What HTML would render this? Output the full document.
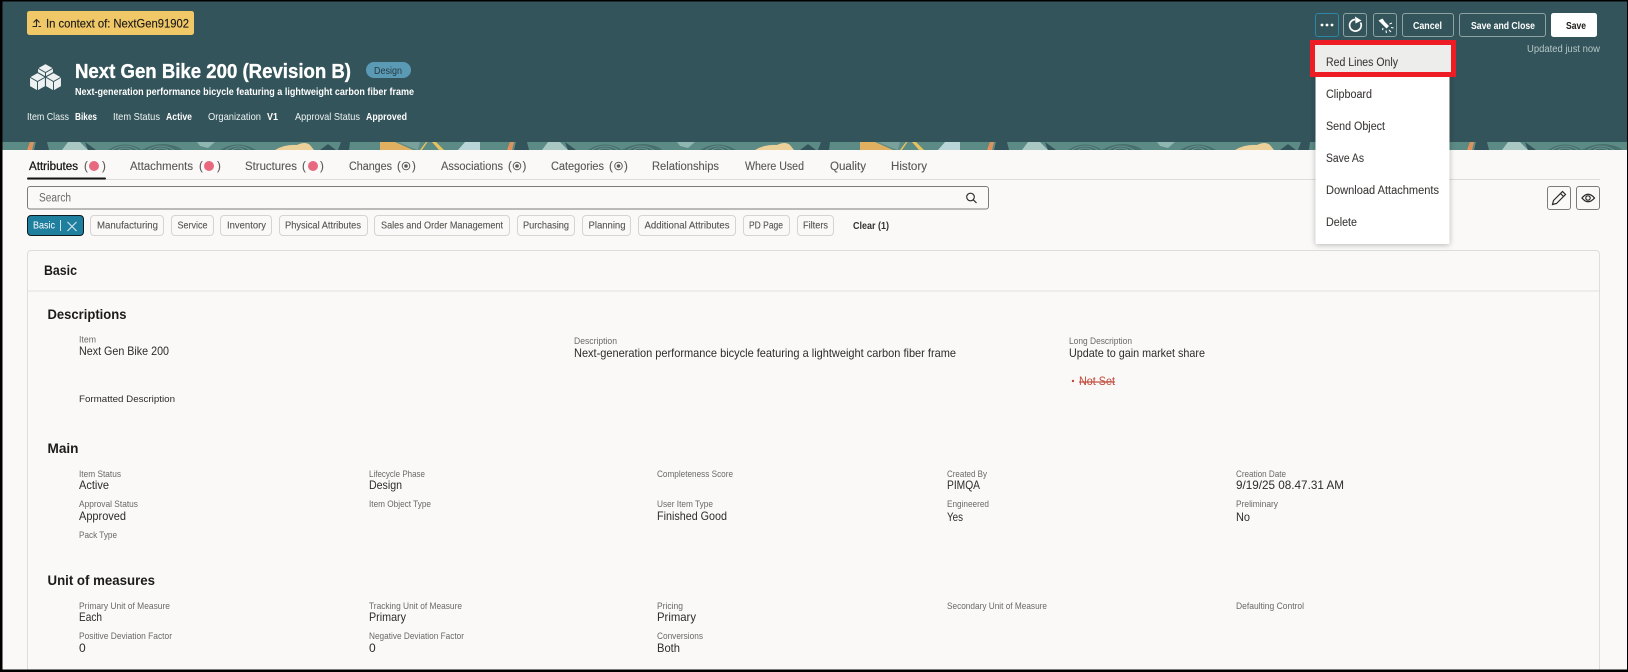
<!DOCTYPE html>
<html lang="en"><head><meta charset="utf-8"><title>Next Gen Bike 200</title>
<style>
html,body{margin:0;padding:0;background:#000;width:1628px;height:672px;overflow:hidden}
svg{display:block}
text{font-family:"Liberation Sans",sans-serif;white-space:pre}
.t{font-size:11.5px;fill:#5a5855;stroke:#5a5855;stroke-width:.12}
.c{font-size:10px;fill:#55534f;stroke:#55534f;stroke-width:.1}
.l{font-size:9.5px;fill:#6b6966}
.v{font-size:12px;fill:#2e2c2a}
.h{font-size:14px;font-weight:bold;fill:#1d1b19}
.m{font-size:10.5px;fill:#eef3f3}
.mb{font-size:10.5px;fill:#fff;font-weight:bold}
.b{font-size:10.5px;fill:#fff;font-weight:bold}
.mn{font-size:11.5px;fill:#3c3a38;stroke:#3c3a38;stroke-width:.08}
.chip{fill:#faf9f7;stroke:#d6d4d1;stroke-width:1}
.btn{fill:none;stroke:#8fa3a4;stroke-width:1}
</style></head><body>
<svg width="1628" height="672" viewBox="0 0 1628 672" xmlns="http://www.w3.org/2000/svg">
<defs>
<pattern id="band" x="0" y="142" width="480" height="8" patternUnits="userSpaceOnUse">
<rect width="480" height="8" fill="#5c8a84"/>
<polygon points="27,8 30,0 34,0 32,8" fill="#e0905a"/>
<polygon points="34,8 36,0 47,0 49,8" fill="#33545a"/>
<polygon points="62,8 68,0 80,0 88,8" fill="#a9c7c3"/>
<path d="M88,8 L85,0 L96,8 Z" fill="#33545a"/>
<path d="M108,8 Q125,-3 142,8 Z M142,8 Q160,-3 180,6 L182,8 Z" fill="#47706f"/>
<path d="M112,8 Q125,0 138,8 M118,8 Q125,4 132,8 M148,8 Q160,0 174,8 M154,8 Q160,4 168,8" fill="none" stroke="#6c9a94" stroke-width=".8"/>
<path d="M197,0 L215,0 L208,6 L200,4 Z" fill="#8fb6b0"/>
<path d="M220,8 Q238,-3 256,8 Z" fill="#47706f"/>
<path d="M226,8 Q238,0 250,8 M232,8 Q238,4 244,8" fill="none" stroke="#6c9a94" stroke-width=".8"/>
<path d="M275,8 Q285,2 297,3 Q305,-1 310,3 L314,8 Z" fill="#ecd09a"/>
<polygon points="320,8 328,2 336,8" fill="#33545a"/>
<polygon points="338,8 341,0 350,0 349,8" fill="#33545a"/>
<polygon points="380,0 395,0 413,8 380,8" fill="#e0b060"/>
<polygon points="398,0 420,0 418,8 412,6" fill="#7aa09b"/>
<polygon points="420,8 426,0 427.500,0 422,8" fill="#e8c25c"/>
<polygon points="432,0 436,0 444,8 439,8" fill="#e8c25c"/>
<polygon points="458,8 465,0 482,0 488,8" fill="#bad5d7"/>
</pattern>
<filter id="sh" x="-10%" y="-10%" width="120%" height="120%"><feDropShadow dx="0" dy="1" stdDeviation="3" flood-color="#000" flood-opacity=".28"/></filter>
</defs>

<!-- frame and backgrounds -->
<rect width="1628" height="672" fill="#000"/>
<rect x="2.500" y="1.500" width="1624.500" height="668" fill="#faf9f7"/>
<rect x="2.500" y="1.500" width="1624.500" height="141" fill="#33545a"/>
<rect x="2.500" y="142" width="1624.500" height="8" fill="url(#band)"/>

<!-- context badge -->
<rect x="27" y="11" width="167" height="24" rx="2.500" fill="#f0c868"/>
<path d="M32.500 26.500H36.500V20M33.500 22.500L36.500 19.500L39.500 22.500M38.500 26.500H41" fill="none" stroke="#2a2824" stroke-width="1.100"/>
<text x="46" y="27.500" font-size="12" fill="#1d1b19" stroke="#1d1b19" stroke-width=".15" textLength="143" lengthAdjust="spacingAndGlyphs">In context of: NextGen91902</text>

<!-- cubes icon -->
<g fill="#eef1f1" stroke="#33545a" stroke-width="1.100" stroke-linejoin="round">
<path d="M45.500 63.500L53.500 68V77L45.500 81.500L37.500 77V68Z"/>
<path d="M37.500 72.500L45.500 77V86.500L37.500 91L29.500 86.500V77Z"/>
<path d="M53.500 72.500L61.500 77V86.500L53.500 91L45.500 86.500V77Z"/>
</g>
<path d="M37.500 68L45.500 72.500L53.500 68M45.500 72.500V77M29.500 77L37.500 81.500L45.500 77M37.500 81.500V91M45.500 77L53.500 81.500L61.500 77M53.500 81.500V91" fill="none" stroke="#33545a" stroke-width="1"/>

<!-- title -->
<text x="75" y="78" font-size="20.500" font-weight="bold" fill="#fff" stroke="#fff" stroke-width=".35" textLength="276" lengthAdjust="spacingAndGlyphs">Next Gen Bike 200 (Revision B)</text>
<rect x="366" y="62" width="45" height="16" rx="8" fill="#5b9ab5"/>
<text x="374" y="74" font-size="10.500" fill="#263a42" textLength="28" lengthAdjust="spacingAndGlyphs">Design</text>
<text x="75" y="95" font-size="10.500" font-weight="bold" fill="#fff" textLength="339" lengthAdjust="spacingAndGlyphs">Next-generation performance bicycle featuring a lightweight carbon fiber frame</text>
<text class="m" x="27" y="120" textLength="42" lengthAdjust="spacingAndGlyphs">Item Class</text>
<text class="mb" x="75" y="120" textLength="22" lengthAdjust="spacingAndGlyphs">Bikes</text>
<text class="m" x="113" y="120" textLength="47" lengthAdjust="spacingAndGlyphs">Item Status</text>
<text class="mb" x="166" y="120" textLength="26" lengthAdjust="spacingAndGlyphs">Active</text>
<text class="m" x="208" y="120" textLength="53" lengthAdjust="spacingAndGlyphs">Organization</text>
<text class="mb" x="267" y="120" textLength="11" lengthAdjust="spacingAndGlyphs">V1</text>
<text class="m" x="295" y="120" textLength="65" lengthAdjust="spacingAndGlyphs">Approval Status</text>
<text class="mb" x="366" y="120" textLength="41" lengthAdjust="spacingAndGlyphs">Approved</text>

<!-- action buttons -->
<rect x="1315.500" y="13.500" width="23" height="23" rx="2.500" fill="none" stroke="#2f86a6"/>
<g fill="#fff"><circle cx="1322" cy="25" r="1.400"/><circle cx="1327" cy="25" r="1.400"/><circle cx="1332" cy="25" r="1.400"/></g>
<rect class="btn" x="1343.500" y="13.500" width="23" height="23" rx="2.500"/>
<path d="M1360.500 22.500A5.800 5.800 0 1 1 1355 19.500" fill="none" stroke="#fff" stroke-width="1.700"/>
<path d="M1355 16.500L1361.500 20.500L1355.500 23.500Z" fill="#fff"/>
<rect class="btn" x="1373.500" y="13.500" width="23" height="23" rx="2.500"/>
<path d="M1378.500 20.500L1382.500 18.500L1384.500 21.500L1389 26L1386.500 28.500L1382 24Z" fill="#fff"/>
<path d="M1389.500 24L1392 23M1391 27.500L1393.500 28M1386 30.500L1386.500 33M1389 30L1391 32M1383 28L1382.500 30" stroke="#fff" stroke-width="1.100" fill="none"/>
<rect class="btn" x="1402.500" y="13.500" width="51" height="23" rx="2.500"/>
<text class="b" x="1413" y="29" textLength="29" lengthAdjust="spacingAndGlyphs">Cancel</text>
<rect class="btn" x="1459.500" y="13.500" width="86" height="23" rx="2.500"/>
<text class="b" x="1471" y="29" textLength="64" lengthAdjust="spacingAndGlyphs">Save and Close</text>
<rect x="1551" y="13" width="46" height="24" rx="2.500" fill="#fff"/>
<text x="1566" y="29" font-size="10.500" font-weight="bold" fill="#1d1b19" textLength="20" lengthAdjust="spacingAndGlyphs">Save</text>
<text x="1527" y="52" font-size="10" fill="#b6c6c8" textLength="73" lengthAdjust="spacingAndGlyphs">Updated just now</text>

<!-- tabs -->
<text class="t" style="fill:#161513;stroke:#161513;stroke-width:.25" x="29" y="170" textLength="49" lengthAdjust="spacingAndGlyphs">Attributes</text>
<text class="t" x="84" y="170">(</text><circle cx="94" cy="166" r="5" fill="#e8697f"/><text class="t" x="102" y="170">)</text>
<text class="t" x="130" y="170" textLength="63" lengthAdjust="spacingAndGlyphs">Attachments</text>
<text class="t" x="199" y="170">(</text><circle cx="209" cy="166" r="5" fill="#e8697f"/><text class="t" x="217" y="170">)</text>
<text class="t" x="245" y="170" textLength="52" lengthAdjust="spacingAndGlyphs">Structures</text>
<text class="t" x="302" y="170">(</text><circle cx="313" cy="166" r="5" fill="#e8697f"/><text class="t" x="320" y="170">)</text>
<text class="t" x="349" y="170" textLength="43" lengthAdjust="spacingAndGlyphs">Changes</text>
<text class="t" x="397" y="170">(</text><circle cx="406" cy="166" r="3.800" fill="none" stroke="#5f5d5a"/><circle cx="406" cy="166" r="1.800" fill="#5f5d5a"/><text class="t" x="412" y="170">)</text>
<text class="t" x="441" y="170" textLength="62" lengthAdjust="spacingAndGlyphs">Associations</text>
<text class="t" x="508" y="170">(</text><circle cx="517" cy="166" r="3.800" fill="none" stroke="#5f5d5a"/><circle cx="517" cy="166" r="1.800" fill="#5f5d5a"/><text class="t" x="522.500" y="170">)</text>
<text class="t" x="551" y="170" textLength="53" lengthAdjust="spacingAndGlyphs">Categories</text>
<text class="t" x="609" y="170">(</text><circle cx="618.500" cy="166" r="3.800" fill="none" stroke="#5f5d5a"/><circle cx="618.500" cy="166" r="1.800" fill="#5f5d5a"/><text class="t" x="624" y="170">)</text>
<text class="t" x="652" y="170" textLength="67" lengthAdjust="spacingAndGlyphs">Relationships</text>
<text class="t" x="745" y="170" textLength="59" lengthAdjust="spacingAndGlyphs">Where Used</text>
<text class="t" x="830" y="170" textLength="36" lengthAdjust="spacingAndGlyphs">Quality</text>
<text class="t" x="891" y="170" textLength="36" lengthAdjust="spacingAndGlyphs">History</text>
<rect x="27" y="179" width="1573" height="1" fill="#dedcd9"/>
<rect x="27" y="177.500" width="79" height="2" rx="1" fill="#161513"/>

<!-- search -->
<rect x="27.500" y="186.500" width="961" height="22.500" rx="2.500" fill="#faf9f7" stroke="#7d7b78"/>
<text x="39" y="201.500" font-size="11.500" fill="#6b6966" textLength="32" lengthAdjust="spacingAndGlyphs">Search</text>
<circle cx="970.500" cy="197" r="3.800" fill="none" stroke="#2a2826" stroke-width="1.100"/>
<path d="M973.300 199.800L976.500 203" stroke="#2a2826" stroke-width="1.200"/>

<!-- pencil and eye -->
<rect x="1547.500" y="186.500" width="23" height="23" rx="2.500" fill="none" stroke="#7d7b78"/>
<path d="M1552.500 204.500L1553.500 200.500L1562.500 191.500L1565.500 194.500L1556.500 203.500ZM1560.500 193.500L1563.500 196.500" fill="none" stroke="#2a2826" stroke-width="1.200"/>
<rect x="1576.500" y="186.500" width="23" height="23" rx="2.500" fill="none" stroke="#7d7b78"/>
<path d="M1582 198Q1588 190.500 1594.500 198Q1588 205.500 1582 198Z" fill="none" stroke="#2a2826" stroke-width="1.300"/>
<circle cx="1588" cy="198" r="2.200" fill="none" stroke="#2a2826" stroke-width="1.200"/>

<!-- chips -->
<rect x="27.500" y="215.500" width="56" height="20" rx="3.500" fill="#1f7f9f" stroke="#0d1a20"/>
<text x="33" y="228.500" font-size="10" fill="#fff" textLength="22" lengthAdjust="spacingAndGlyphs">Basic</text>
<path d="M60.500 220V231" stroke="#cfe3ea"/>
<path d="M67.500 222L76.500 231M76.500 222L67.500 231" stroke="#cfe3ea" stroke-width="1.200"/>
<rect class="chip" x="90.500" y="215.500" width="73" height="20" rx="3.500"/><text class="c" x="97" y="228.500" textLength="61" lengthAdjust="spacingAndGlyphs">Manufacturing</text>
<rect class="chip" x="171.500" y="215.500" width="42" height="20" rx="3.500"/><text class="c" x="177.500" y="228.500" textLength="30" lengthAdjust="spacingAndGlyphs">Service</text>
<rect class="chip" x="220.500" y="215.500" width="51" height="20" rx="3.500"/><text class="c" x="227" y="228.500" textLength="39" lengthAdjust="spacingAndGlyphs">Inventory</text>
<rect class="chip" x="279.500" y="215.500" width="88" height="20" rx="3.500"/><text class="c" x="285" y="228.500" textLength="76" lengthAdjust="spacingAndGlyphs">Physical Attributes</text>
<rect class="chip" x="374.500" y="215.500" width="135" height="20" rx="3.500"/><text class="c" x="381" y="228.500" textLength="122" lengthAdjust="spacingAndGlyphs">Sales and Order Management</text>
<rect class="chip" x="517.500" y="215.500" width="57" height="20" rx="3.500"/><text class="c" x="523" y="228.500" textLength="46" lengthAdjust="spacingAndGlyphs">Purchasing</text>
<rect class="chip" x="582.500" y="215.500" width="48" height="20" rx="3.500"/><text class="c" x="588.500" y="228.500" textLength="37" lengthAdjust="spacingAndGlyphs">Planning</text>
<rect class="chip" x="638.500" y="215.500" width="97" height="20" rx="3.500"/><text class="c" x="644.500" y="228.500" textLength="85" lengthAdjust="spacingAndGlyphs">Additional Attributes</text>
<rect class="chip" x="743.500" y="215.500" width="46" height="20" rx="3.500"/><text class="c" x="749" y="228.500" textLength="34" lengthAdjust="spacingAndGlyphs">PD Page</text>
<rect class="chip" x="797.500" y="215.500" width="36" height="20" rx="3.500"/><text class="c" x="803" y="228.500" textLength="25" lengthAdjust="spacingAndGlyphs">Filters</text>
<text x="853" y="229" font-size="10" font-weight="bold" fill="#333" textLength="36" lengthAdjust="spacingAndGlyphs">Clear (1)</text>

<!-- card -->
<path d="M27.500 670V254.500Q27.500 250.500 31.500 250.500H1595.500Q1599.500 250.500 1599.500 254.500V670" fill="#faf9f7" stroke="#dfddda"/>
<rect x="28" y="290.500" width="1571" height="1" fill="#e3e1de"/>
<text class="h" x="44" y="275" textLength="33" lengthAdjust="spacingAndGlyphs">Basic</text>

<text class="h" x="47.500" y="319" textLength="79" lengthAdjust="spacingAndGlyphs">Descriptions</text>
<text class="l" x="79" y="342.500" textLength="17" lengthAdjust="spacingAndGlyphs">Item</text>
<text class="v" x="79" y="355" textLength="90" lengthAdjust="spacingAndGlyphs">Next Gen Bike 200</text>
<text class="l" style="fill:#2e2c2a" x="79" y="402" textLength="96" lengthAdjust="spacingAndGlyphs">Formatted Description</text>
<text class="l" x="574" y="344" textLength="43" lengthAdjust="spacingAndGlyphs">Description</text>
<text class="v" x="574" y="357" textLength="382" lengthAdjust="spacingAndGlyphs">Next-generation performance bicycle featuring a lightweight carbon fiber frame</text>
<text class="l" x="1069" y="344" textLength="63" lengthAdjust="spacingAndGlyphs">Long Description</text>
<text class="v" x="1069" y="357" textLength="136" lengthAdjust="spacingAndGlyphs">Update to gain market share</text>
<circle cx="1073" cy="381" r="1.200" fill="#c0493a"/>
<text x="1079" y="385" font-size="11.500" fill="#c0493a" text-decoration="line-through" textLength="36" lengthAdjust="spacingAndGlyphs">Not Set</text>

<text class="h" x="47.500" y="453" textLength="31" lengthAdjust="spacingAndGlyphs">Main</text>
<text class="l" x="79" y="477" textLength="42" lengthAdjust="spacingAndGlyphs">Item Status</text>
<text class="v" x="79" y="489" textLength="30" lengthAdjust="spacingAndGlyphs">Active</text>
<text class="l" x="79" y="507" textLength="59" lengthAdjust="spacingAndGlyphs">Approval Status</text>
<text class="v" x="79" y="520" textLength="47" lengthAdjust="spacingAndGlyphs">Approved</text>
<text class="l" x="79" y="538" textLength="38" lengthAdjust="spacingAndGlyphs">Pack Type</text>
<text class="l" x="369" y="477" textLength="56" lengthAdjust="spacingAndGlyphs">Lifecycle Phase</text>
<text class="v" x="369" y="489" textLength="33" lengthAdjust="spacingAndGlyphs">Design</text>
<text class="l" x="369" y="507" textLength="62" lengthAdjust="spacingAndGlyphs">Item Object Type</text>
<text class="l" x="657" y="477" textLength="76" lengthAdjust="spacingAndGlyphs">Completeness Score</text>
<text class="l" x="657" y="507" textLength="56" lengthAdjust="spacingAndGlyphs">User Item Type</text>
<text class="v" x="657" y="520" textLength="70" lengthAdjust="spacingAndGlyphs">Finished Good</text>
<text class="l" x="947" y="477" textLength="40" lengthAdjust="spacingAndGlyphs">Created By</text>
<text class="v" x="947" y="489" textLength="33" lengthAdjust="spacingAndGlyphs">PIMQA</text>
<text class="l" x="947" y="507" textLength="42" lengthAdjust="spacingAndGlyphs">Engineered</text>
<text class="v" x="947" y="521" textLength="16" lengthAdjust="spacingAndGlyphs">Yes</text>
<text class="l" x="1236" y="477" textLength="50" lengthAdjust="spacingAndGlyphs">Creation Date</text>
<text class="v" x="1236" y="489" textLength="108" lengthAdjust="spacingAndGlyphs">9/19/25 08.47.31 AM</text>
<text class="l" x="1236" y="507" textLength="42" lengthAdjust="spacingAndGlyphs">Preliminary</text>
<text class="v" x="1236" y="521" textLength="14" lengthAdjust="spacingAndGlyphs">No</text>

<text class="h" x="47.500" y="585" textLength="107.500" lengthAdjust="spacingAndGlyphs">Unit of measures</text>
<text class="l" x="79" y="609" textLength="91" lengthAdjust="spacingAndGlyphs">Primary Unit of Measure</text>
<text class="v" x="79" y="621" textLength="23" lengthAdjust="spacingAndGlyphs">Each</text>
<text class="l" x="79" y="639" textLength="93" lengthAdjust="spacingAndGlyphs">Positive Deviation Factor</text>
<text class="v" x="79" y="652">0</text>
<text class="l" x="369" y="609" textLength="93" lengthAdjust="spacingAndGlyphs">Tracking Unit of Measure</text>
<text class="v" x="369" y="621" textLength="37" lengthAdjust="spacingAndGlyphs">Primary</text>
<text class="l" x="369" y="639" textLength="95" lengthAdjust="spacingAndGlyphs">Negative Deviation Factor</text>
<text class="v" x="369" y="652">0</text>
<text class="l" x="657" y="609" textLength="26" lengthAdjust="spacingAndGlyphs">Pricing</text>
<text class="v" x="657" y="621" textLength="39" lengthAdjust="spacingAndGlyphs">Primary</text>
<text class="l" x="657" y="639" textLength="46" lengthAdjust="spacingAndGlyphs">Conversions</text>
<text class="v" x="657" y="652" textLength="23" lengthAdjust="spacingAndGlyphs">Both</text>
<text class="l" x="947" y="609" textLength="100" lengthAdjust="spacingAndGlyphs">Secondary Unit of Measure</text>
<text class="l" x="1236" y="609" textLength="68" lengthAdjust="spacingAndGlyphs">Defaulting Control</text>

<!-- dropdown menu -->
<rect x="1315.500" y="44" width="134" height="200" rx="2" fill="#fff" filter="url(#sh)"/>
<rect x="1315" y="44" width="138" height="29" fill="#ededeb"/>
<rect x="1312.500" y="42.500" width="141" height="32" fill="none" stroke="#ee1c25" stroke-width="5"/>
<text class="mn" x="1326" y="66" textLength="72" lengthAdjust="spacingAndGlyphs">Red Lines Only</text>
<text class="mn" x="1326" y="98" textLength="46" lengthAdjust="spacingAndGlyphs">Clipboard</text>
<text class="mn" x="1326" y="130" textLength="59" lengthAdjust="spacingAndGlyphs">Send Object</text>
<text class="mn" x="1326" y="162" textLength="38" lengthAdjust="spacingAndGlyphs">Save As</text>
<text class="mn" x="1326" y="194" textLength="113" lengthAdjust="spacingAndGlyphs">Download Attachments</text>
<text class="mn" x="1326" y="226" textLength="31" lengthAdjust="spacingAndGlyphs">Delete</text>

<!-- frame over content -->
<rect x="0" y="669.500" width="1628" height="2.500" fill="#000"/>
<rect x="1627" y="0" width="1" height="672" fill="#000"/>
</svg>
</body></html>
